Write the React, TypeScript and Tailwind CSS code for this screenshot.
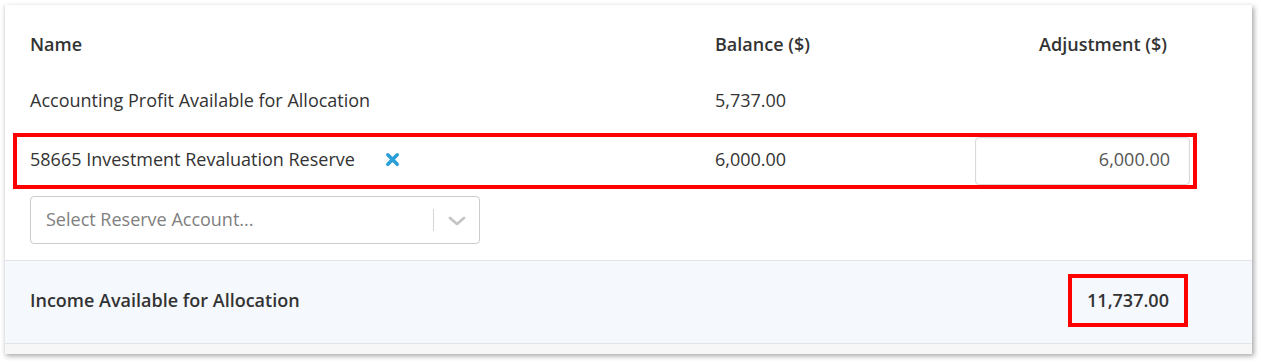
import React from 'react';

function RemoveIcon() {
  return (
    <svg width="15" height="15" viewBox="0 0 16 16" className="text-[#2a9fd8]">
      <path d="M3 3 L13 13 M13 3 L3 13" stroke="currentColor" strokeWidth="3.8" strokeLinecap="round" />
    </svg>
  );
}

function Chevron() {
  return (
    <svg width="20" height="12" viewBox="0 0 20 12" className="text-[#c4c4c4]">
      <path d="M3 3 L10 9 L17 3" fill="none" stroke="currentColor" strokeWidth="2.8" strokeLinecap="round" strokeLinejoin="round" />
    </svg>
  );
}

export default function App() {
  return (
    <div className="bg-white w-[1261px] h-[363px] pt-[5px] pl-[4px] font-['Open_Sans',sans-serif] text-[#333] text-[18px] leading-[24px]">
      <div className="w-[1248px] bg-white shadow-[2px_2px_5px_rgba(0,0,0,0.35)] border-l border-[#e6e6e6]">
        <div className="px-[25px]">
          {/* header */}
          <div className="grid grid-cols-[685px_260px_215px] h-[80px] pb-[2px] items-center font-semibold">
            <div>Name</div>
            <div>Balance ($)</div>
            <div className="text-right pr-[23px]">Adjustment ($)</div>
          </div>

          {/* row 1 */}
          <div className="grid grid-cols-[685px_260px_215px] h-[32px] pb-[2px] items-center">
            <div>Accounting Profit Available for Allocation</div>
            <div>5,737.00</div>
            <div />
          </div>

          {/* row 2 */}
          <div className="relative grid grid-cols-[685px_260px_215px] h-[48px] mt-[20px] items-center">
            <div className="absolute -left-[17px] -top-[4px] w-[1184px] h-[56px] border-[4px] border-[#ff0000] pointer-events-none" />
            <div className="flex items-center gap-[30px] pb-[4px]">
              <span>58665 Investment Revaluation Reserve</span>
              <RemoveIcon />
            </div>
            <div className="pb-[4px]">6,000.00</div>
            <div className="h-[48px] border border-[#d9d9d9] rounded-[4px] shadow-[inset_0_1px_2px_rgba(0,0,0,0.06)] flex items-center justify-end pr-[19px] pb-[4px] text-[#555]">
              6,000.00
            </div>
          </div>

          {/* select */}
          <div className="mt-[11px] w-[450px] h-[48px] border border-[#cccccc] rounded-[4px] flex items-center text-[#808080]">
            <div className="flex-1 pl-[15px] pb-[2px]">Select Reserve Account...</div>
            <div className="w-px h-[22px] bg-[#d4d4d4]" />
            <div className="w-[45px] flex justify-center pt-[2px]">
              <Chevron />
            </div>
          </div>
        </div>

        {/* footer */}
        <div className="mt-[16px] h-[84px] pb-[4px] bg-[#f5f8fd] border-y border-[#e2e4e8] px-[25px] grid grid-cols-[945px_215px] items-center font-semibold">
          <div>Income Available for Allocation</div>
          <div className="flex justify-end pr-[2px]">
            <div className="w-[120px] h-[53px] border-[4px] border-[#ff0000] flex items-center justify-center">
              11,737.00
            </div>
          </div>
        </div>
        <div className="h-[10px] bg-[#f7f7f8]" />
      </div>
    </div>
  );
}
